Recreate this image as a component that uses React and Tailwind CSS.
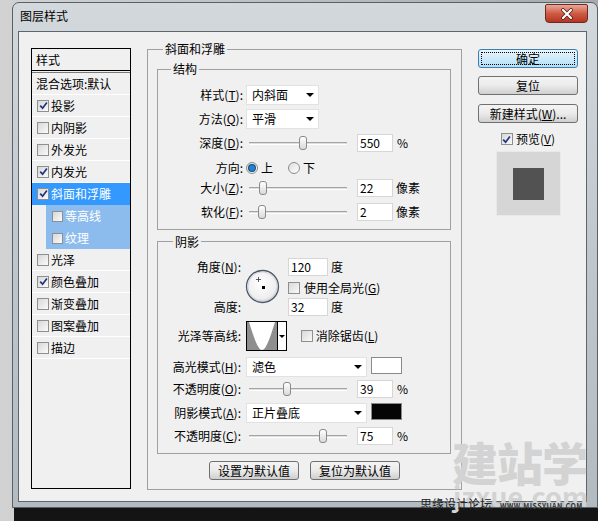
import React from 'react';

const Check = ({ checked, size = 'h-[12px] w-[12px]' }) => (
  <span className={`flex ${size} shrink-0 items-center justify-center border border-[#8e8f8f] bg-gradient-to-br from-[#d8d8d8] to-[#fafafa]`}>
    {checked && (
      <svg width="9" height="9" viewBox="0 0 9 9">
        <path d="M1.2 4.6 L3.6 7.2 L7.9 1.4" stroke="#22357e" strokeWidth="1.7" fill="none" />
      </svg>
    )}
  </span>
);

const Tri = () => (
  <span className="h-0 w-0 border-x-[4px] border-t-[4px] border-x-transparent border-t-black" />
);

const Dropdown = ({ value, width }) => (
  <div className={`flex h-[20px] ${width} items-center justify-between border border-[#e2e2e2] bg-white pl-[5px] pr-[4px]`}>
    <span>{value}</span>
    <Tri />
  </div>
);

const Slider = ({ pos }) => (
  <div className="relative h-[18px] w-[104px] shrink-0">
    <div className="absolute left-[3px] right-[3px] top-[8px] h-[3px] border-y border-t-[#a5a5a5] border-b-white bg-[#dedede]" />
    <div
      className="absolute top-[2px] h-[14px] w-[8px] rounded-[3px] border border-[#8a8a8a] bg-gradient-to-b from-white to-[#d9d9d9]"
      style={{ left: pos - 4 }}
    />
  </div>
);

const Field = ({ value, width = 'w-[36px]' }) => (
  <div className={`flex h-[18px] ${width} shrink-0 items-center border border-[#d6d6d6] bg-white pl-[2px]`}>{value}</div>
);

const Radio = ({ on }) => (
  <span className="flex h-[12px] w-[12px] items-center justify-center rounded-full border border-[#8c8c8c] bg-gradient-to-br from-[#dedede] to-white">
    {on && <span className="h-[6px] w-[6px] rounded-full bg-[#2a80c8] ring-1 ring-[#0d4a86]" />}
  </span>
);

const Button = ({ children, primary }) => (
  <div
    className={
      primary
        ? 'flex h-[19px] w-[100px] items-center justify-center rounded-[3px] border border-[#3c7fb1] bg-gradient-to-b from-[#eaf6fd] to-[#b2dff7] outline-1 -outline-offset-4 outline-dotted outline-black'
        : 'flex h-[19px] w-[100px] items-center justify-center rounded-[3px] border border-[#707070] bg-gradient-to-b from-[#f4f4f4] via-[#ebebeb] to-[#cfcfcf]'
    }
  >
    {children}
  </div>
);

const SmallButton = ({ children }) => (
  <div className="flex h-[19px] w-[90px] items-center justify-center rounded-[3px] border border-[#707070] bg-gradient-to-b from-[#f4f4f4] via-[#ebebeb] to-[#cfcfcf]">
    {children}
  </div>
);

const styleItems = [
  { t: '投影', c: true },
  { t: '内阴影' },
  { t: '外发光' },
  { t: '内发光', c: true },
  { t: '斜面和浮雕', c: true, sel: true },
  { t: '等高线', sub: true },
  { t: '纹理', sub: true },
  { t: '光泽' },
  { t: '颜色叠加', c: true },
  { t: '渐变叠加' },
  { t: '图案叠加' },
  { t: '描边' },
];

const StyleList = () => (
  <div className="flex h-[441px] w-[100px] shrink-0 flex-col border border-black">
    <div className="flex h-[21px] items-center pl-[4px]">样式</div>
    <div className="h-[3px] border-y border-t-black border-b-[#7a7a7a]" />
    <div className="flex h-[22px] items-center border-b border-white pl-[4px]">混合选项:默认</div>
    {styleItems.map((it) =>
      it.sub ? (
        <div key={it.t} className="flex h-[22px] pl-[14px]">
          <div className="flex flex-1 items-center gap-[2px] bg-[#8cbbee] pl-[6px] text-white">
            <Check size="h-[11px] w-[11px]" />
            <span>{it.t}</span>
          </div>
        </div>
      ) : (
        <div
          key={it.t}
          className={`flex h-[22px] items-center gap-[2px] border-b pl-[5px] ${
            it.sel ? 'border-[#3399ff] bg-[#3399ff] text-white' : 'border-white'
          }`}
        >
          <Check checked={it.c} />
          <span>{it.t}</span>
        </div>
      )
    )}
  </div>
);

const Row = ({ label, mt, h, lw = 'w-[85px]', gap = 'ml-[3px]', children }) => (
  <div className={`flex ${h} ${mt} items-center`}>
    <div className={`${lw} shrink-0 text-right`}>{label}</div>
    <div className={`flex items-center ${gap}`}>{children}</div>
  </div>
);

const Dial = () => (
  <svg width="35" height="35" viewBox="0 0 35 35">
    <defs>
      <radialGradient id="dialFill" cx="45%" cy="40%" r="60%">
        <stop offset="0%" stopColor="#ffffff" />
        <stop offset="80%" stopColor="#eeeeee" />
        <stop offset="100%" stopColor="#d4d4d4" />
      </radialGradient>
    </defs>
    <circle cx="17.5" cy="17.5" r="16" fill="url(#dialFill)" stroke="#4a5868" strokeWidth="1.3" />
    <circle cx="17.5" cy="17.5" r="14.6" fill="none" stroke="#c9ced4" strokeWidth="0.8" />
    <path d="M13.5 8 V13 M11 10.5 H16" stroke="#333" strokeWidth="0.8" />
    <rect x="17" y="17" width="3" height="3" fill="#000" />
  </svg>
);

const Contour = () => (
  <div className="flex h-[30px] w-[41px] border border-black bg-white">
    <svg width="30" height="28" viewBox="0 0 30 28" className="shrink-0">
      <rect width="30" height="28" fill="#8e8e8e" />
      <path d="M2 0 C 7 16, 11 28, 15 28 C 19 28, 23 16, 28 0 Z" fill="#ffffff" />
    </svg>
    <div className="flex flex-1 items-center justify-center border-l border-black">
      <span className="h-0 w-0 border-x-[3px] border-t-[3px] border-x-transparent border-t-black" />
    </div>
  </div>
);

const Swatch = ({ color }) => (
  <div className={`ml-[4px] h-[17px] w-[31px] self-start border border-[#8a8a8a] ${color}`} />
);

const GroupLabel = ({ children, ml, mt = '-mt-[9px]' }) => (
  <div className={`${mt} ${ml} h-[16px] w-fit bg-[#f0f0f0] px-[2px] leading-[16px]`}>{children}</div>
);

const BevelPanel = () => (
  <div className="ml-[16px] mt-[1px] flex h-[441px] w-[315px] shrink-0 flex-col border border-[#a0a0a0]">
    <GroupLabel ml="ml-[15px]">斜面和浮雕</GroupLabel>

    <div className="ml-[9px] mt-[12px] flex w-[294px] flex-col border border-[#a0a0a0] pb-[8px]">
      <GroupLabel ml="ml-[13px]">结构</GroupLabel>
      <Row mt="mt-[8px]" h="h-[20px]" label={<>样式(<u>T</u>):</>}>
        <Dropdown value="内斜面" width="w-[73px]" />
      </Row>
      <Row mt="mt-[4px]" h="h-[20px]" label={<>方法(<u>Q</u>):</>}>
        <Dropdown value="平滑" width="w-[73px]" />
      </Row>
      <Row mt="mt-[5px]" h="h-[18px]" label={<>深度(<u>D</u>):</>}>
        <Slider pos={57} />
        <div className="ml-[7px]"><Field value="550" /></div>
        <span className="ml-[4px]">%</span>
      </Row>
      <Row mt="mt-[8px]" h="h-[16px]" label="方向:">
        <Radio on />
        <span className="ml-[3px]">上</span>
        <span className="ml-[15px]"><Radio /></span>
        <span className="ml-[3px]">下</span>
      </Row>
      <Row mt="mt-[3px]" h="h-[18px]" label={<>大小(<u>Z</u>):</>}>
        <Slider pos={17} />
        <div className="ml-[7px]"><Field value="22" /></div>
        <span className="ml-[3px]">像素</span>
      </Row>
      <Row mt="mt-[6px]" h="h-[18px]" label={<>软化(<u>F</u>):</>}>
        <Slider pos={16} />
        <div className="ml-[7px]"><Field value="2" /></div>
        <span className="ml-[3px]">像素</span>
      </Row>
    </div>

    <div className="ml-[9px] mt-[11px] flex w-[294px] flex-col border border-[#a0a0a0] pb-[8px]">
      <GroupLabel ml="ml-[15px]" mt="-mt-[8px]">阴影</GroupLabel>

      <div className="mt-[8px] flex h-[58px]">
        <div className="flex w-[83px] shrink-0 flex-col justify-between text-right">
          <div className="flex h-[18px] items-center justify-end">角度(<u>N</u>):</div>
          <div className="flex h-[18px] items-center justify-end">高度:</div>
        </div>
        <div className="ml-[4px] w-[43px] shrink-0 pt-[11px]">
          <Dial />
        </div>
        <div className="flex flex-col">
          <div className="flex h-[18px] items-center">
            <Field value="120" width="w-[40px]" />
            <span className="ml-[3px]">度</span>
          </div>
          <div className="mt-[6px] flex h-[12px] items-center gap-[4px]">
            <Check />
            <span>使用全局光(<u>G</u>)</span>
          </div>
          <div className="mt-[4px] flex h-[18px] items-center">
            <Field value="32" width="w-[40px]" />
            <span className="ml-[3px]">度</span>
          </div>
        </div>
      </div>

      <Row mt="mt-[5px]" h="h-[30px]" lw="w-[83px]" gap="ml-[5px]" label="光泽等高线:">
        <Contour />
        <span className="ml-[14px]"><Check /></span>
        <span className="ml-[0px] pl-[0px]">&nbsp;消除锯齿(<u>L</u>)</span>
      </Row>
      <Row mt="mt-[6px]" h="h-[20px]" lw="w-[83px]" gap="ml-[5px]" label={<>高光模式(<u>H</u>):</>}>
        <Dropdown value="滤色" width="w-[121px]" />
        <Swatch color="bg-white" />
      </Row>
      <Row mt="mt-[3px]" h="h-[18px]" lw="w-[83px]" gap="ml-[5px]" label={<>不透明度(<u>O</u>):</>}>
        <Slider pos={41} />
        <div className="ml-[7px]"><Field value="39" /></div>
        <span className="ml-[4px]">%</span>
      </Row>
      <Row mt="mt-[5px]" h="h-[20px]" lw="w-[83px]" gap="ml-[5px]" label={<>阴影模式(<u>A</u>):</>}>
        <Dropdown value="正片叠底" width="w-[121px]" />
        <Swatch color="bg-[#050505]" />
      </Row>
      <Row mt="mt-[4px]" h="h-[18px]" lw="w-[83px]" gap="ml-[5px]" label={<>不透明度(<u>C</u>):</>}>
        <Slider pos={77} />
        <div className="ml-[7px]"><Field value="75" /></div>
        <span className="ml-[4px]">%</span>
      </Row>
    </div>

    <div className="mt-[7px] flex justify-center gap-[11px]">
      <SmallButton>设置为默认值</SmallButton>
      <SmallButton>复位为默认值</SmallButton>
    </div>
  </div>
);

const SideColumn = () => (
  <div className="ml-[16px] mt-[1px] flex w-[100px] shrink-0 flex-col">
    <Button primary>确定</Button>
    <div className="mt-[8px]"><Button>复位</Button></div>
    <div className="mt-[9px]"><Button>新建样式(<u>W</u>)...</Button></div>
    <div className="mt-[10px] flex h-[12px] items-center justify-center gap-[3px]">
      <Check checked />
      <span>预览(<u>V</u>)</span>
    </div>
    <div className="mx-auto mt-[6px] flex h-[65px] w-[65px] items-center justify-center border border-[#e9e9e9] bg-[#d6d6d6]">
      <div className="h-[32px] w-[31px] bg-[#525252]" />
    </div>
  </div>
);

export default function App() {
  return (
    <div className="relative h-[521px] w-[598px] overflow-hidden bg-gradient-to-r from-[#d2d2d2] to-[#a9a9a9] font-['Noto_Sans_CJK_SC','Liberation_Sans',sans-serif] text-[12px] leading-none text-black">
      <div className="flex h-[508px] pl-[12px] pt-[2px]">
        <div className="flex h-[506px] w-[586px] flex-col rounded-t-[7px] border border-[#56616a] bg-gradient-to-b from-[#d3d8dc] via-[#c0c7cc] to-[#b3bbc1]">
          <div className="flex h-[28px] shrink-0 items-start justify-between">
            <span className="ml-[7px] mt-[7px] text-[12px]">图层样式</span>
            <div className="mr-[9px] mt-[1px] flex h-[19px] w-[43px] items-center justify-center rounded-b-[4px] rounded-t-[2px] border border-[#6b2a20] bg-gradient-to-b from-[#e8a899] via-[#cf5a45] to-[#b53522]">
              <svg width="14" height="12" viewBox="0 0 14 12">
                <path d="M3 2 L11 10 M11 2 L3 10" stroke="#4a1a12" strokeWidth="3.6" strokeLinecap="round" />
                <path d="M3 2 L11 10 M11 2 L3 10" stroke="#ffffff" strokeWidth="2.2" strokeLinecap="round" />
              </svg>
            </div>
          </div>
          <div className="mb-[5px] ml-[5px] mr-[10px] flex flex-1 items-start border border-[#5b666e] bg-[#f0f0f0] pl-[12px] pt-[16px]">
            <StyleList />
            <BevelPanel />
            <SideColumn />
          </div>
        </div>
      </div>
      <div className="ml-[14px] h-[13px] bg-[#141414]" />

      <div className="pointer-events-none absolute left-[452px] top-[438px] text-[46px] font-black leading-none tracking-[-1px] text-[#d3d3d3]">
        建站学
      </div>
      <div className="pointer-events-none absolute left-[453px] top-[482px] text-[27px] font-bold leading-none text-[#d3d3d3]">
        jzxue.com
      </div>
      <div className="pointer-events-none absolute left-[420px] top-[498px] text-[12px] leading-none text-[#222]">
        思缘设计论坛
      </div>
      <div className="pointer-events-none absolute left-[500px] top-[503px] text-[7px] font-bold leading-none tracking-[0.5px] text-[#333]">
        WWW.MISSYUAN.COM
      </div>
    </div>
  );
}
